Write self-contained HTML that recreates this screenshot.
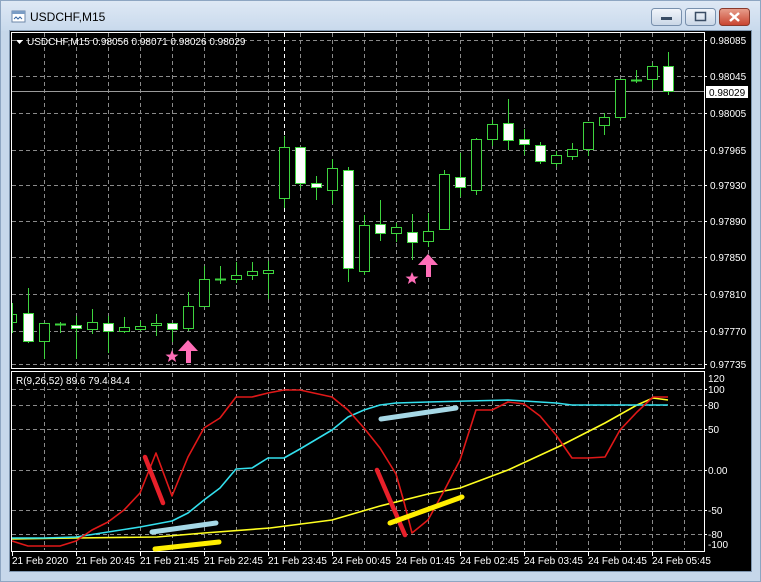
<!DOCTYPE html>
<html><head><meta charset="utf-8"><style>
html,body{margin:0;padding:0;width:761px;height:582px;overflow:hidden;background:#c6d7ea;}
svg{display:block}
text{font-family:"Liberation Sans",sans-serif;font-size:10px;}
</style></head><body>
<svg width="761" height="582" viewBox="0 0 761 582" xmlns="http://www.w3.org/2000/svg">
<defs>
<linearGradient id="tb" x1="0" y1="0" x2="0" y2="1"><stop offset="0" stop-color="#dfe9f5"/><stop offset="1" stop-color="#c8d9ec"/></linearGradient>
<linearGradient id="bt" x1="0" y1="0" x2="0" y2="1"><stop offset="0" stop-color="#f2f6fb"/><stop offset="1" stop-color="#c9d6e6"/></linearGradient>
<linearGradient id="cl" x1="0" y1="0" x2="0" y2="1"><stop offset="0" stop-color="#e8a08e"/><stop offset="1" stop-color="#c8432e"/></linearGradient>
</defs>
<rect x="0" y="0" width="761" height="582" fill="#c6d7ea"/>
<rect x="0" y="0" width="761" height="31" fill="url(#tb)"/>
<rect x="0.5" y="0.5" width="760" height="581" fill="none" stroke="#8ea6c2"/>
<!-- title icon -->
<rect x="12" y="11" width="13" height="11" fill="#fff" stroke="#6d87a8"/>
<rect x="12" y="11" width="13" height="3" fill="#7a9cc4"/>
<path d="M14 19 l2 -2 2 2 2 -2 2 2" stroke="#3a6aa6" fill="none"/>
<text x="30" y="21" font-size="12" fill="#000" style="font-size:12px">USDCHF,M15</text>
<!-- buttons -->
<rect x="651.5" y="8.5" width="30" height="17" rx="3" fill="url(#bt)" stroke="#7890ad"/>
<rect x="661" y="17" width="11" height="3" fill="#394c64"/>
<rect x="685.5" y="8.5" width="30" height="17" rx="3" fill="url(#bt)" stroke="#7890ad"/>
<rect x="695.5" y="12.5" width="10" height="8" fill="none" stroke="#394c64" stroke-width="1.5"/>
<rect x="719.5" y="8.5" width="30" height="17" rx="3" fill="url(#cl)" stroke="#8a3a2c"/>
<path d="M730 13 l9 8 M739 13 l-9 8" stroke="#fff" stroke-width="2.5"/>
<!-- chart bg -->
<rect x="9" y="30" width="742" height="541" fill="#000"/>
<rect x="9.5" y="30.5" width="742" height="541" fill="none" stroke="#7f95ae"/>
<g shape-rendering="crispEdges">
<!-- main grid -->
<g stroke="#8a8a8a" stroke-dasharray="4,3" stroke-width="1">
<path d="M12 40.5H704M12 76.5H704M12 113.5H704M12 150.5H704M12 185.5H704M12 221.5H704M12 257.5H704M12 294.5H704M12 331.5H704M12 364.5H704"/>
<path d="M44.5 33V368M76.5 33V368M108.5 33V368M140.5 33V368M172.5 33V368M204.5 33V368M236.5 33V368M268.5 33V368M300.5 33V368M332.5 33V368M364.5 33V368M396.5 33V368M428.5 33V368M460.5 33V368M492.5 33V368M524.5 33V368M556.5 33V368M588.5 33V368M620.5 33V368M652.5 33V368M684.5 33V368"/>
<path d="M12 389.5H704M12 405.5H704M12 429.5H704M12 470.5H704M12 510.5H704M12 534.5H704"/>
<path d="M44.5 373V550M76.5 373V550M108.5 373V550M140.5 373V550M172.5 373V550M204.5 373V550M236.5 373V550M268.5 373V550M300.5 373V550M332.5 373V550M364.5 373V550M396.5 373V550M428.5 373V550M460.5 373V550M492.5 373V550M524.5 373V550M556.5 373V550M588.5 373V550M620.5 373V550M652.5 373V550M684.5 373V550"/>
</g>
<path d="M284.5 33V368M284.5 373V550" stroke="#fff" stroke-dasharray="4,3"/>
<!-- current price line -->
<path d="M12 91.5H704" stroke="#9a9a9a"/>
<!-- frames -->
<rect x="11.5" y="32.5" width="693" height="336" fill="none" stroke="#fff"/>
<rect x="11.5" y="371.5" width="693" height="180" fill="none" stroke="#fff"/>
<!-- time ticks -->
<path d="M12.5 551V556M76.5 551V556M140.5 551V556M204.5 551V556M268.5 551V556M332.5 551V556M396.5 551V556M460.5 551V556M524.5 551V556M588.5 551V556M652.5 551V556" stroke="#fff"/>
<path d="M704 40.5h3M704 76.5h3M704 113.5h3M704 150.5h3M704 185.5h3M704 221.5h3M704 257.5h3M704 294.5h3M704 331.5h3M704 364.5h3M704 389.5h3M704 405.5h3M704 429.5h3M704 470.5h3M704 510.5h3M704 534.5h3" stroke="#fff"/>
<!-- candles -->
<g stroke="#3ed43e" stroke-width="1">
<path d="M12.5 303V333M28.5 288V343M44.5 323V359M60.5 322V333M76.5 316V359M92.5 309V334M108.5 316V353M124.5 317V333M140.5 321V331M156.5 314V336M172.5 323V342M188.5 292V331M204.5 266V306M220.5 266V284M236.5 262V283M252.5 262V280M268.5 261V299M284.5 136V208M300.5 147V188M316.5 176V200M332.5 159V204M348.5 167V282M364.5 215V275M380.5 200V241M396.5 223V242M412.5 214V260M428.5 213V247M444.5 170V230M460.5 153V197M476.5 138V195M492.5 120V146M508.5 99V150M524.5 129V155M540.5 142V164M556.5 151V167M572.5 143V160M588.5 122V156M604.5 113V135M620.5 79V120M636.5 70V83M652.5 63V89M668.5 52V95"/>
<path d="M55 324.5H66M215 279.5H226M631 80.5H642" stroke-width="2"/>
<g fill="#000">
<rect x="12.5" y="314.5" width="4" height="8"/>
<rect x="39.5" y="323.5" width="10" height="18"/>
<rect x="87.5" y="322.5" width="10" height="7"/>
<rect x="119.5" y="327.5" width="10" height="4"/>
<rect x="135.5" y="326.5" width="10" height="3"/>
<rect x="151.5" y="323.5" width="10" height="2"/>
<rect x="183.5" y="306.5" width="10" height="22"/>
<rect x="199.5" y="279.5" width="10" height="27"/>
<rect x="231.5" y="275.5" width="10" height="4"/>
<rect x="247.5" y="271.5" width="10" height="4"/>
<rect x="263.5" y="270.5" width="10" height="3"/>
<rect x="279.5" y="147.5" width="10" height="51"/>
<rect x="327.5" y="168.5" width="10" height="22"/>
<rect x="359.5" y="225.5" width="10" height="46"/>
<rect x="391.5" y="227.5" width="10" height="6"/>
<rect x="423.5" y="231.5" width="10" height="10"/>
<rect x="439.5" y="174.5" width="10" height="55"/>
<rect x="471.5" y="139.5" width="10" height="51"/>
<rect x="487.5" y="124.5" width="10" height="15"/>
<rect x="551.5" y="155.5" width="10" height="8"/>
<rect x="567.5" y="149.5" width="10" height="7"/>
<rect x="583.5" y="122.5" width="10" height="27"/>
<rect x="599.5" y="117.5" width="10" height="8"/>
<rect x="615.5" y="79.5" width="10" height="38"/>
<rect x="647.5" y="66.5" width="10" height="13"/>
</g>
<g fill="#fff">
<rect x="23.5" y="313.5" width="10" height="28"/>
<rect x="71.5" y="325.5" width="10" height="3"/>
<rect x="103.5" y="323.5" width="10" height="8"/>
<rect x="167.5" y="323.5" width="10" height="6"/>
<rect x="295.5" y="147.5" width="10" height="36"/>
<rect x="311.5" y="183.5" width="10" height="4"/>
<rect x="343.5" y="170.5" width="10" height="98"/>
<rect x="375.5" y="224.5" width="10" height="9"/>
<rect x="407.5" y="232.5" width="10" height="10"/>
<rect x="455.5" y="177.5" width="10" height="10"/>
<rect x="503.5" y="123.5" width="10" height="17"/>
<rect x="519.5" y="139.5" width="10" height="5"/>
<rect x="535.5" y="145.5" width="10" height="16"/>
<rect x="663.5" y="66.5" width="10" height="25"/>
</g>
</g>
</g>
<!-- markers -->
<g fill="#ff6eb8">
<polygon points="172,350 173.8,354.5 178.5,354.6 174.8,357.5 176.1,362 172,359.3 167.9,362 169.2,357.5 165.5,354.6 170.2,354.5"/>
<polygon points="188,340 198,351 191,351 191,363 186,363 186,351 178,351"/>
<polygon points="412,272 413.8,276.5 418.5,276.6 414.8,279.5 416.1,284 412,281.3 407.9,284 409.2,279.5 405.5,276.6 410.2,276.5"/>
<polygon points="428,254 438,265 431,265 431,277 426,277 426,265 418,265"/>
</g>
<!-- indicator lines -->
<g fill="none" stroke-linejoin="round">
<polyline stroke="#ffff20" stroke-width="1.6" points="12,539 76,538 157,537 204,533 270,528 332,520 380,506 428,494 460,488 508,470 560,446 605,423 637,405 653,398 668,400"/>
<polyline stroke="#33e0ee" stroke-width="1.6" points="12,538 44,538 76,537 108,532 140,527 172,521 188,513 204,500 220,488 236,469 252,468 268,458 284,458 300,449 332,430 348,417 364,410 380,405 396,403 428,402 508,400 556,403 572,405 668,405"/>
<polyline stroke="#e01818" stroke-width="1.6" points="12,541 28,546 60,546 76,541 92,530 108,522 124,510 140,493 156,453 172,496 188,457 204,428 220,418 236,397 252,397 268,393 284,390 300,390 332,397 348,410 364,428 380,448 396,474 404,502 412,533 428,520 444,491 460,460 476,410 492,410 508,402 524,404 540,416 556,435 572,458 588,458 605,457 620,430 637,412 653,397 668,397"/>
<path d="M145,457 L163,503" stroke="#e8202a" stroke-width="4.5" stroke-linecap="round"/>
<path d="M377,470 L405,535" stroke="#e8202a" stroke-width="4.5" stroke-linecap="round"/>
<path d="M152,532 L216,523" stroke="#a6d8e6" stroke-width="5" stroke-linecap="round"/>
<path d="M381,419 L456,408" stroke="#a6d8e6" stroke-width="5" stroke-linecap="round"/>
<path d="M155,549 L219,542" stroke="#ffee00" stroke-width="5" stroke-linecap="round"/>
<path d="M390,523 L462,497" stroke="#ffee00" stroke-width="5" stroke-linecap="round"/>
</g>
<!-- text -->
<path d="M16 40h7l-3.5 4z" fill="#fff"/>
<text x="27" y="45" fill="#fff">USDCHF,M15  0.98056 0.98071 0.98026 0.98029</text>
<text x="16" y="384" fill="#fff">R(9,26,52) 89.6 79.4 84.4</text>
<g fill="#fff">
<text x="710" y="44">0.98085</text>
<text x="710" y="80">0.98045</text>
<text x="710" y="117">0.98005</text>
<text x="710" y="154">0.97965</text>
<text x="710" y="189">0.97930</text>
<text x="710" y="225">0.97890</text>
<text x="710" y="261">0.97850</text>
<text x="710" y="298">0.97810</text>
<text x="710" y="335">0.97770</text>
<text x="710" y="368">0.97735</text>
<text x="708" y="382">120</text>
<text x="708" y="393">100</text>
<text x="708" y="409">80</text>
<text x="708" y="433">50</text>
<text x="708" y="474">0.00</text>
<text x="708" y="514">-50</text>
<text x="708" y="538">-80</text>
<text x="708" y="548">-100</text>
<text x="12" y="564">21 Feb 2020</text>
<text x="76" y="564">21 Feb 20:45</text>
<text x="140" y="564">21 Feb 21:45</text>
<text x="204" y="564">21 Feb 22:45</text>
<text x="268" y="564">21 Feb 23:45</text>
<text x="332" y="564">24 Feb 00:45</text>
<text x="396" y="564">24 Feb 01:45</text>
<text x="460" y="564">24 Feb 02:45</text>
<text x="524" y="564">24 Feb 03:45</text>
<text x="588" y="564">24 Feb 04:45</text>
<text x="652" y="564">24 Feb 05:45</text>
</g>
<rect x="706" y="86" width="42" height="12" fill="#fff"/>
<text x="709" y="96" fill="#000">0.98029</text>
</svg>
</body></html>
